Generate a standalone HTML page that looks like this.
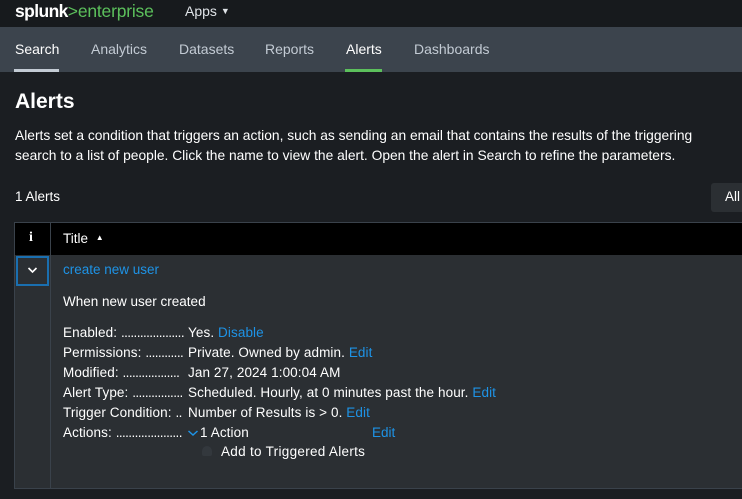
<!DOCTYPE html>
<html><head><style>
*{margin:0;padding:0;box-sizing:border-box}
body{width:742px;height:499px;overflow:hidden;background:#1b1e22;font-family:"Liberation Sans",sans-serif;color:#fff;position:relative;font-size:13.5px}
.a{position:absolute;white-space:nowrap}
.top{position:absolute;left:0;top:0;width:742px;height:27px;background:#171a1d}
.nav{position:absolute;left:0;top:27px;width:742px;height:45px;background:#3c444d}
.nav span{position:absolute;top:14px;font-size:14px;color:#c3cbd4}
.ul{position:absolute;height:3px;top:42px}
.blue{color:#1e93e6}
</style></head><body>
<div class="top"></div>
<div class="a" style="left:15px;top:1px;font-size:17.5px;font-weight:bold;letter-spacing:-0.6px">splunk<span style="color:#5cc05c;font-weight:normal;letter-spacing:-0.2px">&gt;enterprise</span></div>
<div class="a" style="left:185px;top:3px;font-size:14px;color:#e0e4e8">Apps <span style="font-size:9px;vertical-align:2px">▼</span></div>
<div class="nav">
<span style="left:15px;color:#fff">Search</span><div class="ul" style="left:14px;width:45px;background:#c3cbd4"></div>
<span style="left:91px">Analytics</span>
<span style="left:179px">Datasets</span>
<span style="left:265px">Reports</span>
<span style="left:346px;color:#fff">Alerts</span><div class="ul" style="left:345px;width:37px;background:#5cc05c"></div>
<span style="left:414px">Dashboards</span>
</div>
<div class="a" style="left:15px;top:90px;font-size:21px;font-weight:bold">Alerts</div>
<div class="a" style="left:15px;top:126px;font-size:13.8px;line-height:20px;color:#fff">Alerts set a condition that triggers an action, such as sending an email that contains the results of the triggering<br>search to a list of people. Click the name to view the alert. Open the alert in Search to refine the parameters.</div>
<div class="a" style="left:15px;top:189px">1 Alerts</div>
<div class="a" style="left:711px;top:183px;width:40px;height:29px;background:#2b2f33;border-radius:3px;padding:6px 0 0 14px">All</div>
<div class="a" style="left:14px;top:222px;width:740px;height:267px;border:1px solid #3a424b;background:#2b2f33"></div>
<div class="a" style="left:15px;top:223px;width:740px;height:32px;background:#000"></div>
<div class="a" style="left:50px;top:223px;width:1px;height:266px;background:#3a424b"></div>
<div class="a" style="left:29px;top:230px;font-family:'Liberation Serif',serif;font-weight:bold;font-size:14px">i</div>
<div class="a" style="left:63px;top:231px">Title <span style="font-size:8px;vertical-align:3px;margin-left:4px">▲</span></div>
<div class="a" style="left:16px;top:256px;width:33px;height:30px;border:2px solid #1a6fb0"></div>
<svg class="a" style="left:27px;top:266px" width="11" height="8"><path d="M1.5 2 L5.5 6 L9.5 2" stroke="#fff" stroke-width="1.6" fill="none"/></svg>
<div class="a blue" style="left:63px;top:262px">create new user</div>
<div class="a" style="left:63px;top:294px">When new user created</div>
<div class="a" style="left:63px;top:323px;line-height:20px;letter-spacing:0.1px">Enabled: <span style="letter-spacing:-0.6px">....................</span><br>Permissions: <span style="letter-spacing:-0.6px">............</span><br>Modified: <span style="letter-spacing:-0.6px">..................</span><br>Alert Type: <span style="letter-spacing:-0.6px">................</span><br>Trigger Condition: <span style="letter-spacing:-0.6px">..</span><br>Actions: <span style="letter-spacing:-0.6px">.....................</span></div>
<div class="a" style="left:188px;top:323px;line-height:20px;letter-spacing:0.1px">Yes. <span class="blue">Disable</span><br>Private. Owned by admin. <span class="blue">Edit</span><br>Jan 27, 2024 1:00:04 AM<br>Scheduled. Hourly, at 0 minutes past the hour. <span class="blue">Edit</span><br>Number of Results is &gt; 0. <span class="blue">Edit</span><br><span style="margin-left:12px">1 Action</span></div>
<svg class="a" style="left:187px;top:429px" width="12" height="8"><path d="M1.5 2 L6 6 L10.5 2" stroke="#1e93e6" stroke-width="1.5" fill="none"/></svg>
<div class="a blue" style="left:372px;top:425px">Edit</div>
<div class="a" style="left:202px;top:446px;width:10px;height:10px;border-radius:5px 5px 2px 2px;background:#33383d"></div>
<div class="a" style="left:221px;top:444px;letter-spacing:0.3px">Add to Triggered Alerts</div>
</body></html>
